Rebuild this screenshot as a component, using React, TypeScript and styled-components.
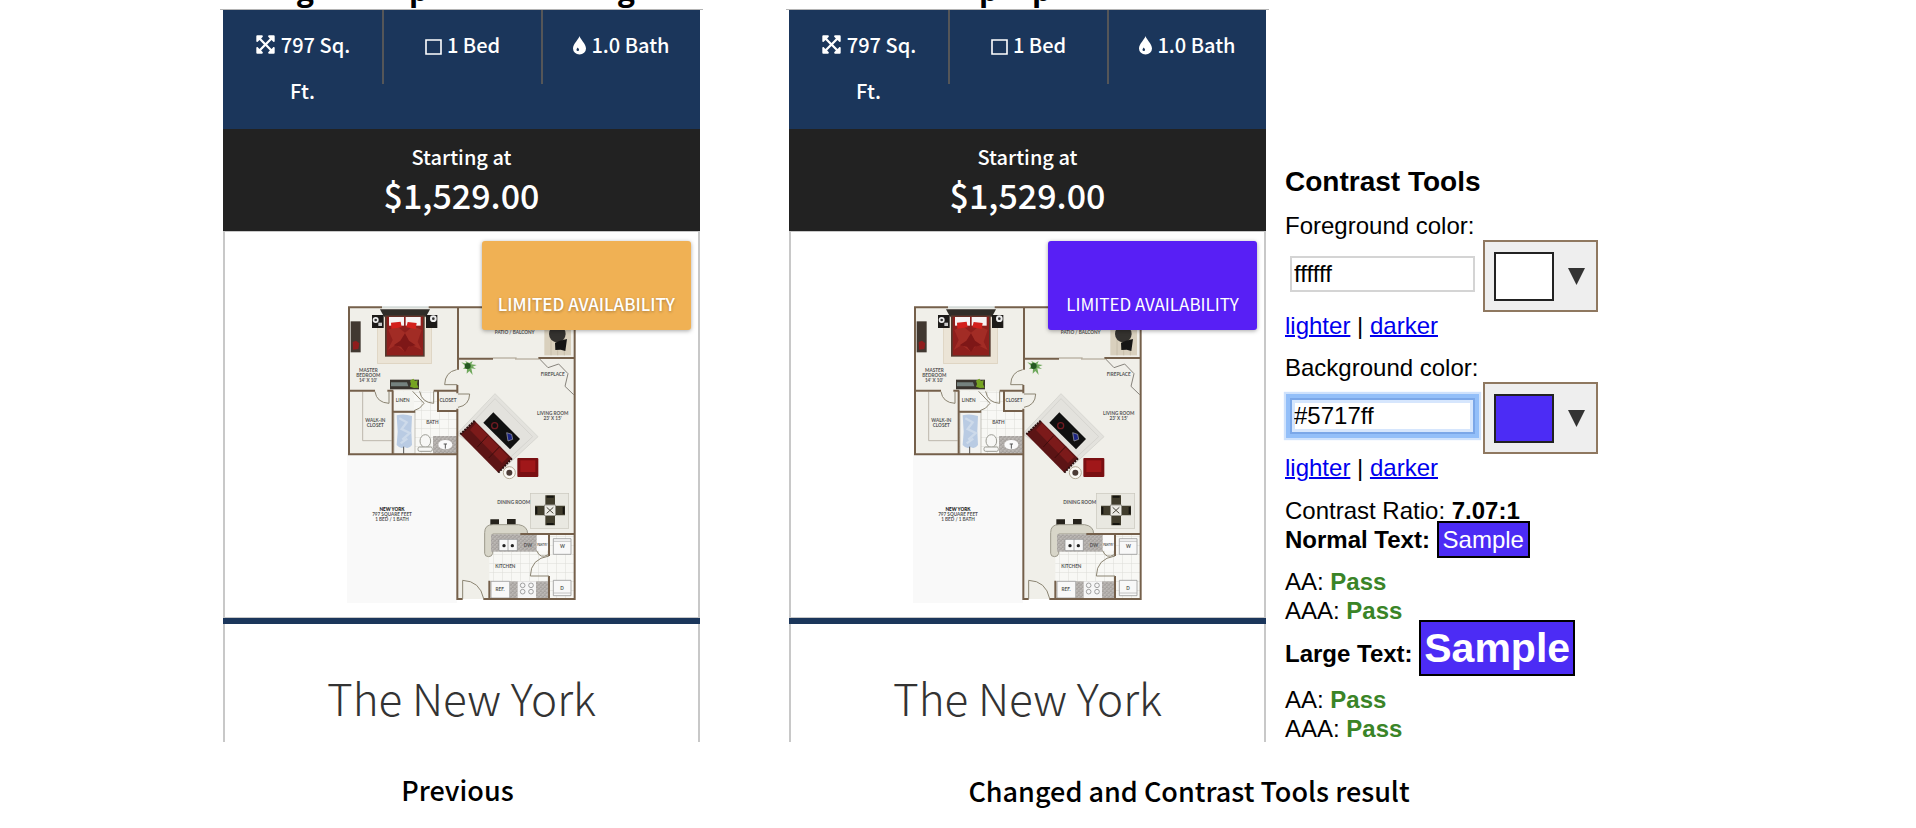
import React from "react";
import styled, { createGlobalStyle } from "styled-components";
import { FaExpandArrowsAlt } from "react-icons/fa";

const GlobalStyle = createGlobalStyle`
  *, *::before, *::after { box-sizing: border-box; }
  body { margin: 0; background: #fff; color: #000; }
  h2, h3, p, figure { margin: 0; }
`;

const sourceSans = `"Noto Sans CJK SC", "Noto Sans", sans-serif`;

const Page = styled.main`
  display: grid;
  grid-template-columns: minmax(0, 483px) minmax(0, 814px);
  justify-content: center;
  column-gap: 83px;
  padding-right: 96px;
`;

const Column = styled.figure`
  display: flex;
  flex-direction: column;
`;

const CutHeading = styled.div<{ $start: number; $gap: number }>`
  display: flex;
  align-items: flex-end;
  height: 9px;
  overflow: hidden;
  padding: 0 0 4px ${(p) => p.$start}px;
  gap: ${(p) => p.$gap}px;
  font: bold 30px/30px "Open Sans", sans-serif;
`;

const Row = styled.div`
  display: flex;
  align-items: flex-start;
`;

const CardFrame = styled.div`
  flex: 0 1 483px;
  min-width: 0;
  border-top: 1px solid #b4b4b4;
  padding: 0 3px;
`;

const Card = styled.article`
  position: relative;
  font-family: ${sourceSans};
  color: #fff;
`;

const Specs = styled.div`
  display: grid;
  grid-template-columns: repeat(3, 1fr);
  align-items: start;
  height: 119px;
  background: #1b365b;
`;

const Spec = styled.div`
  min-height: 74px;
  padding: 12px 30px 0;
  text-align: center;
  font-size: 20px;
  font-weight: 500;
  line-height: 46px;
  &:not(:first-child) {
    padding: 12px 0 0;
    border-left: 2px solid #555658;
  }
  svg { vertical-align: -2px; margin-right: 5px; }
`;

const Price = styled.div`
  display: flex;
  flex-direction: column;
  align-items: center;
  height: 102px;
  padding-top: 14px;
  background: #222;
  font-weight: 500;
`;

const PriceLabel = styled.span`
  font-size: 20px;
  line-height: 28px;
`;

const PriceValue = styled.strong`
  font-size: 34px;
  line-height: 48px;
  font-weight: 500;
`;

const Photo = styled.div`
  position: relative;
  display: flex;
  justify-content: center;
  height: 387px;
  padding-top: 73px;
  border: solid #c8c8c8;
  border-width: 1px 2px;
`;

const Tag = styled.span<{ $bg: string; $bold?: boolean }>`
  position: absolute;
  top: 9px;
  right: 7px;
  min-width: 209px;
  padding: 48px 16px 12px;
  text-align: center;
  border-radius: 3px;
  background: ${(p) => p.$bg};
  box-shadow: 0 1px 4px rgba(0, 0, 0, 0.35);
  font-size: 17px;
  line-height: 29px;
  font-weight: ${(p) => (p.$bold ? 500 : 400)};
  text-shadow: ${(p) => (p.$bold ? "0 1px 3px rgba(0, 0, 0, 0.3)" : "none")};
  white-space: nowrap;
`;

const Title = styled.h3`
  height: 124px;
  padding-top: 47px;
  border: solid #c8c8c8;
  border-width: 0 2px;
  text-align: center;
  color: #333;
  font-size: 44px;
  font-weight: 300;
  line-height: 64px;
  position: relative;
  &::before {
    content: "";
    position: absolute;
    inset: 0 -2px auto;
    height: 6px;
    background: #1b365b;
  }
`;

const Caption = styled.figcaption`
  padding: 28px 8px 20px 0;
  text-align: center;
  font: 500 27px/40px ${sourceSans};
`;

const Tools = styled.section`
  padding: 157px 2px 0 16px;
  flex: none;
  width: 331px;
  font: 24px/28px "Liberation Sans", Arial, sans-serif;
`;

const ToolsTitle = styled.h2`
  margin-bottom: 14px;
  font-size: 28px;
  line-height: 32px;
`;

const Field = styled.div`
  margin-bottom: 14px;
  label { display: block; }
`;

const Controls = styled.div`
  display: flex;
  align-items: center;
  justify-content: space-between;
  height: 72px;
  padding-left: 5px;
`;

const HexInput = styled.input<{ $ring?: boolean }>`
  width: 185px;
  height: 36px;
  margin-bottom: 4px;
  padding: 0 2px;
  border: 2px solid ${(p) => (p.$ring ? "#7ba7e8" : "#d4d4d4")};
  outline: none;
  box-shadow: ${(p) =>
    p.$ring ? "0 0 0 4px #93bff9, 0 0 1px 6px #cfe2fc, inset 0 0 0 3px #d6e6fd" : "none"};
  font: inherit;
  color: #000;
`;

const Picker = styled.button`
  display: flex;
  align-items: center;
  gap: 14px;
  width: 115px;
  height: 72px;
  padding: 0 9px;
  border: 2px solid #8f7860;
  background: #eee;
`;

const Swatch = styled.span<{ $color: string }>`
  width: 60px;
  height: 49px;
  border: 2px solid #222;
  background: ${(p) => p.$color};
`;

const Link = styled.a`
  color: #0000ee;
  text-decoration: underline;
  text-decoration-thickness: 2px;
`;

const Results = styled.div`
  line-height: 29px;
  p { margin-bottom: 13px; }
  p:last-child { margin-bottom: 0; }
`;

const Sample = styled.span<{ $large?: boolean }>`
  padding: 3px ${(p) => (p.$large ? 3 : 4)}px;
  border: 2px solid #000;
  background: #4c2cf5;
  color: #fff;
  font-size: ${(p) => (p.$large ? 41 : 24)}px;
  font-weight: ${(p) => (p.$large ? 700 : 400)};
  line-height: ${(p) => (p.$large ? 47 : 29)}px;
`;

const Pass = styled.strong`
  color: #3a8427;
`;

const wall = "#75604b";
const floor = "#f0efe9";

function FloorPlan() {
  const id = React.useId();
  const tiles = `url(#${id}t)`;
  const granite = `url(#${id}g)`;
  return (
    <svg width="230" height="299" viewBox="21 225 690 897" role="img" aria-label="Floor plan of The New York">
      <defs>
        <pattern id={`${id}t`} width="27" height="27" patternUnits="userSpaceOnUse">
          <rect width="27" height="27" fill="#f8f8f5" />
          <path d="M0 0H27M0 0V27" stroke="#dcdcd8" strokeWidth="3" />
        </pattern>
        <pattern id={`${id}g`} width="12" height="12" patternUnits="userSpaceOnUse">
          <rect width="12" height="12" fill="#b2aeaa" />
          <path d="M1 2h3v3H1zM8 7h3v2H8zM5 10h2v2H5z" fill="#989492" />
          <path d="M7 1h3v3H7zM1 7h3v3H1z" fill="#c8c5c2" />
        </pattern>
      </defs>
      <rect x="21" y="670" width="330" height="449" fill="#f9f9f9" />
      <path d="M27 231H704V1107H352V673H27Z" fill={floor} />
      {/* tiled rooms */}
      <rect x="158" y="484" width="194" height="188" fill={tiles} />
      <rect x="448" y="915" width="254" height="190" fill={tiles} />
      {/* bedroom */}
      <rect x="113" y="262" width="161" height="139" fill="#ebe4d6" stroke="#d8cdb8" strokeWidth="2" />
      <path d="M126 232H266" stroke="#d5dbd8" strokeWidth="6" />
      <path d="M120 238H270L258 260H132Z" fill="#302d28" />
      <rect x="135" y="256" width="119" height="124" fill="#54392d" />
      <rect x="140" y="260" width="109" height="116" fill="#8e1f1c" />
      <path d="M145 300l25-12 25 20 25-20 25 12-12 35 12 25-30-15-23 18-25-18-24 15 15-30z" fill="#a22c25" />
      <path d="M195 310l12 22 20 14-22 4-10 16-12-16-22-4 20-14z" fill="#7e1717" />
      <rect x="147" y="261" width="45" height="26" fill="#f5f3f3" />
      <rect x="197" y="261" width="45" height="26" fill="#f5f3f3" />
      <path d="M153 278l29-3 3 17-31 4zM203 276l27 3-3 18-28-5z" fill="#d3201c" />
      <path d="M96 255h35v39H96zM258 255h34v39h-34z" fill="#1c1a18" />
      <circle cx="107" cy="270" r="9" fill="#eee" />
      <circle cx="107" cy="270" r="4" fill="#333" />
      <circle cx="280" cy="266" r="10" fill="#eee" />
      <circle cx="280" cy="266" r="4" fill="#333" />
      <path d="M115 278h11v10h-11z" fill="#ccc" />
      <rect x="32" y="274" width="30" height="93" fill="#413831" />
      <path d="M38 336l10-4 10 8-3 17-16 2z" fill="#8f1d1d" />
      <rect x="150" y="449" width="87" height="29" fill="#3a352f" />
      <path d="M153 457h48l4 12h-52z" fill="#75827f" />
      <path d="M210 452l10-6 5 7 8-2-2 12 5 10-14 1-12-4 3-8z" fill="#76a422" />
      {/* bathroom */}
      <rect x="162" y="548" width="63" height="124" fill="#f3f3f1" stroke="#aaa89f" strokeWidth="2" />
      <path d="M170 556q22-6 46 2l-2 45 2 42q-10 14-22 6-12 8-24-6l3-40z" fill="#b9cbe3" />
      <path d="M178 565l22 12-15 20 24 12-22 20M182 640l20-14" fill="none" stroke="#cddaea" strokeWidth="7" />
      <path d="M191 650v22" stroke="#555" strokeWidth="3" />
      <rect x="279" y="618" width="72" height="53" fill={granite} />
      <ellipse cx="316" cy="644" rx="21" ry="14" fill="#fafafa" />
      <path d="M316 642v14M311 642h10" stroke="#555" strokeWidth="3" />
      <g fill="#f7f7f5" stroke="#9c9c94" strokeWidth="3">
        <ellipse cx="256" cy="633" rx="16" ry="19" />
        <rect x="234" y="651" width="43" height="13" rx="5" />
      </g>
      {/* closets */}
      <path d="M68 485V632H155" fill="none" stroke="#a39c8e" strokeWidth="2" />
      <rect x="160" y="485" width="62" height="58" fill="#f4f4f0" />
      <rect x="296" y="485" width="55" height="58" fill={floor} />
      {/* patio */}
      <rect x="613" y="240" width="80" height="136" fill="#d9d0bd" />
      <path d="M633 240V376M653 240V376M673 240V376" stroke="#bfb5a0" strokeWidth="2" />
      <circle cx="652" cy="312" r="25" fill="#34322f" />
      <path d="M645 338l15-6 21-5-5 36-14-4-16 1z" fill="#151515" />
      {/* plant */}
      <path d="M364 397l16 4-4-8 12 6 10-6-4 10 16 2-12 5 10 7-14-2 4 20-10-12-8 8 1-14-12-1 8-7z" fill="#6fa85c" />
      <circle cx="383" cy="408" r="9" fill="#245721" />
      {/* living room */}
      <path d="M465 491L594 620 497 710 350 612Z" fill="#e3e2dd" stroke="#cfcec9" strokeWidth="2" />
      <path d="M465 506L578 620 496 696 366 611Z" fill="none" stroke="#d6d5d0" strokeWidth="3" />
      <path d="M460 547L540 627 510 658 430 578Z" fill="#101010" />
      <circle cx="464" cy="587" r="9" fill="none" stroke="#721b22" strokeWidth="4" />
      <path d="M500 608l15 5 3 15-14 5z" fill="#1c2583" stroke="#aaa" strokeWidth="2" />
      <path d="M404 572L516 685 475 728 361 613Z" fill="#5c1415" />
      <path d="M408 579L505 680 486 699 390 600Z" fill="#7c1a1a" />
      <path d="M443 617l-31 34M479 650l-33 34" stroke="#3e0c0c" strokeWidth="3" />
      <path d="M404 572l-43 41M516 685l-41 43" stroke="#2b1010" strokeWidth="6" strokeDasharray="6 3" />
      <rect x="532" y="684" width="63" height="57" rx="3" fill="#7a0f12" />
      <rect x="541" y="691" width="45" height="35" fill="#a01719" />
      <circle cx="508" cy="728" r="18" fill="#faf8f3" stroke="#b3a996" strokeWidth="3" />
      <circle cx="508" cy="728" r="9" fill="#4b3b35" />
      <path d="M597 385L624 413 656 402 684 431 675 469 701 494" fill="none" stroke="#86827b" strokeWidth="3" />
      {/* dining room */}
      <rect x="571" y="790" width="115" height="105" fill="#e9e8e1" stroke="#cac7bc" strokeWidth="2" />
      <path d="M616 796h29v28h-29zM616 858h29v28h-29zM585 827h28v29h-28zM647 827h28v29h-28z" fill="#413d2d" />
      <path d="M620 797h21v6h-21zM620 879h21v6h-21zM586 831h6v21h-6zM668 831h6v21h-6z" fill="#15140f" />
      <rect x="614" y="825" width="32" height="32" fill="#ecebe5" stroke="#77746a" strokeWidth="2" />
      <path d="M620 832l20 18M640 832l-20 18" stroke="#4a473d" strokeWidth="3" />
      {/* kitchen */}
      <path d="M451 868h26v18h-26zM501 867h26v20h-26z" fill="#25221b" />
      <path d="M434 970V908Q434 884 458 884H536Q563 888 563 912H458V970Q456 980 446 980 434 980 434 970Z" fill="#d8d6c9" stroke="#9c998b" strokeWidth="3" />
      <rect x="453" y="913" width="137" height="52" fill={granite} />
      <g fill="#f8f8f8" stroke="#888" strokeWidth="2">
        <path d="M477 928h55v34h-55zM504 928v34" />
        <path d="M453 1054h56v50h-56zM640 926h53v47h-53zM640 1051h53v46h-53z" />
      </g>
      <path d="M640 934h53M640 1089h53" stroke="#aaa" strokeWidth="2" />
      <circle cx="492" cy="947" r="5" fill="#222" />
      <circle cx="517" cy="947" r="5" fill="#222" />
      <rect x="510" y="1054" width="115" height="51" fill={granite} />
      <rect x="533" y="1054" width="55" height="50" fill="#f6f6f6" />
      <g fill="none" stroke="#777" strokeWidth="2">
        <circle cx="548" cy="1066" r="7" />
        <circle cx="573" cy="1066" r="7" />
        <circle cx="548" cy="1085" r="7" />
        <circle cx="573" cy="1085" r="7" />
      </g>
      <rect x="591" y="914" width="34" height="48" fill="#fafafa" />
      {/* walls */}
      <g fill="none" stroke={wall} strokeWidth="6">
        <path d="M126 232H27V673H352" />
        <path d="M266 232H704V1107H430M368 1107H352V536M352 490V465M354 419V232" />
        <path d="M27 482H105M142 482H160M281 482H354M158 482V673M158 545H226M294 482V543H352" />
        <path d="M354 386H459M595 384H704M541 912H704M627 912V978M627 1038V1107M448 1052V1107" />
      </g>
      <path d="M459 384H530M525 387H597" stroke="#a59a88" strokeWidth="3" />
      {/* doors */}
      <g fill="none" stroke="#8b8472" strokeWidth="3">
        <path d="M105 485Q110 518 147 520V484M239 484Q245 518 281 520V484M218 484L252 520Q240 538 222 542M350 419Q315 426 314 464H352M354 492H389Q388 526 354 532" />
        <path d="M368 1106V1051Q420 1053 431 1106M627 978Q572 986 571 1038H627M590 962Q600 988 625 974" />
      </g>
      {/* room names */}
      <g fontFamily="Lato, sans-serif" fontSize="14" fontWeight="700" fill="#555" textAnchor="middle">
        <text x="85" y="426">MASTER</text>
        <text x="85" y="441">BEDROOM</text>
        <text x="84" y="456">14' X 10'</text>
        <text x="524" y="312">PATIO / BALCONY</text>
        <text x="638" y="437">FIREPLACE</text>
        <text x="638" y="556">LIVING ROOM</text>
        <text x="638" y="571">23' X 15'</text>
        <text x="188" y="517">LINEN</text>
        <text x="324" y="516">CLOSET</text>
        <text x="106" y="575">WALK-IN</text>
        <text x="106" y="590">CLOSET</text>
        <text x="277" y="582">BATH</text>
        <text x="521" y="822">DINING ROOM</text>
        <text x="496" y="1013">KITCHEN</text>
        <text x="564" y="952">DW</text>
        <text x="607" y="949" fontSize="8">PANTRY</text>
        <text x="480" y="1083">REF.</text>
        <text x="667" y="954">W</text>
        <text x="666" y="1079">D</text>
        <text x="156" y="842" fontWeight="900" fill="#111">NEW YORK</text>
        <text x="156" y="858">797 SQUARE FEET</text>
        <text x="156" y="873">1 BED / 1 BATH</text>
      </g>
    </svg>
  );
}

function SquareIcon() {
  return (
    <svg width="17" height="17" viewBox="0 0 17 17" aria-hidden="true">
      <path d="M1 2H16V16H1Z" fill="none" stroke="#fff" strokeWidth="1.6" />
    </svg>
  );
}

function DropIcon() {
  return (
    <svg width="13" height="19" viewBox="0 0 13 19" aria-hidden="true">
      <path
        fill="#fff"
        fillRule="evenodd"
        d="M6.5 0C7 3 13 8 13 12.4A6.5 6.2 0 0 1 0 12.4C0 8 6 3 6.5 0ZM4.7 11.4C4.4 12 3.5 12.8 3.5 13.7A1.3 1.3 0 0 0 6.1 13.7C6.1 12.8 5 12 4.7 11.4Z"
      />
    </svg>
  );
}

function PlanCard({ tagColor, bold }: { tagColor: string; bold?: boolean }) {
  return (
    <CardFrame>
      <Card>
        <Specs>
          <Spec><FaExpandArrowsAlt size={21} />797 Sq. Ft.</Spec>
          <Spec><SquareIcon />1 Bed</Spec>
          <Spec><DropIcon />1.0 Bath</Spec>
        </Specs>
        <Price>
          <PriceLabel>Starting at</PriceLabel>
          <PriceValue>$1,529.00</PriceValue>
        </Price>
        <Photo>
          <FloorPlan />
          <Tag $bg={tagColor} $bold={bold}>LIMITED AVAILABILITY</Tag>
        </Photo>
        <Title>The New York</Title>
      </Card>
    </CardFrame>
  );
}

function ColorField({ id, label, value, color, ring }: {
  id: string; label: string; value: string; color: string; ring?: boolean;
}) {
  return (
    <Field>
      <label htmlFor={id}>{label}</label>
      <Controls>
        <HexInput id={id} type="text" defaultValue={value} $ring={ring} />
        <Picker type="button" aria-label={`Pick ${label.replace(":", "")}`}>
          <Swatch $color={color} />
          <svg width="17" height="17" viewBox="0 0 17 17" aria-hidden="true">
            <path d="M0 0H17L8.5 17Z" fill="#333" />
          </svg>
        </Picker>
      </Controls>
      <Link href="#lighter">lighter</Link> | <Link href="#darker">darker</Link>
    </Field>
  );
}

function ContrastTools() {
  return (
    <Tools>
      <ToolsTitle>Contrast Tools</ToolsTitle>
      <ColorField id="foreground" label="Foreground color:" value="ffffff" color="#fff" />
      <ColorField id="background" label="Background color:" value="#5717ff" color="#4c2cf5" ring />
      <Results>
        <p>
          Contrast Ratio: <b>7.07:1</b><br />
          <b>Normal Text:</b> <Sample>Sample</Sample>
        </p>
        <div>AA: <Pass>Pass</Pass></div>
        <div>AAA: <Pass>Pass</Pass></div>
        <p><b>Large Text:</b> <Sample $large>Sample</Sample></p>
        <div>AA: <Pass>Pass</Pass></div>
        <div>AAA: <Pass>Pass</Pass></div>
      </Results>
    </Tools>
  );
}

export default function App() {
  return (
    <>
      <GlobalStyle />
      <Page>
        <Column>
          <CutHeading $start={77} $gap={95}><span>g</span><span>p</span><span /><span>g</span></CutHeading>
          <Row><PlanCard tagColor="#f0b154" bold /></Row>
          <Caption>Previous</Caption>
        </Column>
        <Column>
          <CutHeading $start={193} $gap={34}><span>p</span><span>p</span></CutHeading>
          <Row>
            <PlanCard tagColor="#581ff5" />
            <ContrastTools />
          </Row>
          <Caption>Changed and Contrast Tools result</Caption>
        </Column>
      </Page>
    </>
  );
}
